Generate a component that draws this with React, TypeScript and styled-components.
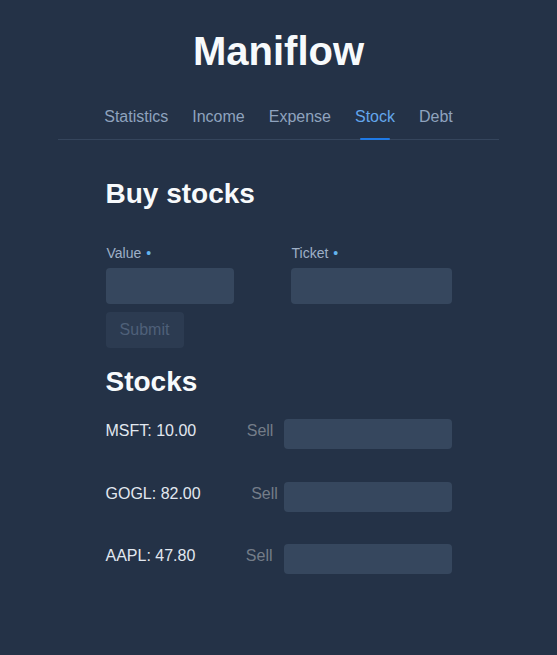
import React from "react";
import styled, { createGlobalStyle } from "styled-components";

const Global = createGlobalStyle`
  html, body {
    margin: 0;
    padding: 0;
    background: #243247;
    font-family: "Liberation Sans", Arial, sans-serif;
  }
  * { box-sizing: border-box; }
`;

const Page = styled.div`
  min-height: 655px;
  background: #243247;
  display: flex;
  flex-direction: column;
  align-items: center;
  padding-top: 27px;
`;

const Title = styled.h1`
  margin: 0;
  font-size: 40px;
  line-height: 48px;
  font-weight: 700;
  color: #f7fafc;
`;

const TabList = styled.nav`
  margin-top: 21.5px;
  width: 441px;
  display: flex;
  justify-content: center;
  border-bottom: 1px solid #35455c;
`;

const Tab = styled.div<{ $active?: boolean }>`
  position: relative;
  padding: 8px 12px 10px;
  font-size: 16px;
  line-height: 24px;
  color: ${(p) => (p.$active ? "#63a6ec" : "#8fa3be")};
  &::after {
    content: "";
    display: ${(p) => (p.$active ? "block" : "none")};
    position: absolute;
    left: 50%;
    bottom: -1px;
    width: 30px;
    height: 2px;
    margin-left: -15px;
    background: #1f7ae6;
    border-radius: 1px;
  }
`;

const Content = styled.main`
  width: 346px;
  margin-top: 37.5px;
  display: flex;
  flex-direction: column;
`;

const Heading = styled.h2<{ $gap?: number }>`
  margin: ${(p) => p.$gap ?? 0}px 0 0;
  font-size: 28px;
  line-height: 33.6px;
  font-weight: 700;
  color: #f7fafc;
`;

const FormRow = styled.div`
  margin-top: 32px;
  display: grid;
  grid-template-columns: 128px 161px;
  justify-content: space-between;
`;

const Field = styled.label`
  display: flex;
  flex-direction: column;
`;

const Label = styled.span`
  font-size: 14px;
  line-height: 21px;
  color: #9eb0c7;
  padding-left: 1px;
  margin-bottom: 4.5px;
`;

const Required = styled.span`
  color: #63b3ed;
  margin-left: 5px;
`;

const Input = styled.input<{ $h?: number }>`
  display: block;
  width: 100%;
  height: ${(p) => p.$h ?? 36}px;
  border: none;
  border-radius: 4px;
  background: #36475e;
  outline: none;
  padding: 0 10px;
  color: #e2e8f0;
  font-family: inherit;
  font-size: 16px;
`;

const SubmitButton = styled.button`
  margin-top: 8px;
  align-self: flex-start;
  width: 78px;
  height: 36px;
  border: none;
  border-radius: 4px;
  background: #2c3b51;
  color: #4f6079;
  font-family: inherit;
  font-size: 16px;
  padding: 0;
`;

const StockList = styled.div`
  margin-top: 21px;
  display: flex;
  flex-direction: column;
  gap: 32.5px;
`;

const StockRow = styled.div`
  display: flex;
  align-items: flex-start;
`;

const StockText = styled.span`
  font-size: 16px;
  line-height: 24px;
  color: #e2e8f0;
`;

const SellLabel = styled.span`
  margin-left: 50.5px;
  font-size: 16px;
  line-height: 24px;
  color: #747d89;
`;

const SellInputWrap = styled.div`
  margin-left: auto;
  width: 168px;
`;

const stocks = [
  { ticker: "MSFT", value: "10.00" },
  { ticker: "GOGL", value: "82.00" },
  { ticker: "AAPL", value: "47.80" },
];

export default function App() {
  return (
    <>
      <Global />
      <Page>
        <Title>Maniflow</Title>
        <TabList>
          <Tab>Statistics</Tab>
          <Tab>Income</Tab>
          <Tab>Expense</Tab>
          <Tab $active>Stock</Tab>
          <Tab>Debt</Tab>
        </TabList>
        <Content>
          <Heading>Buy stocks</Heading>
          <FormRow>
            <Field>
              <Label>
                Value<Required>•</Required>
              </Label>
              <Input />
            </Field>
            <Field>
              <Label>
                Ticket<Required>•</Required>
              </Label>
              <Input />
            </Field>
          </FormRow>
          <SubmitButton disabled>Submit</SubmitButton>
          <Heading $gap={16.5}>Stocks</Heading>
          <StockList>
            {stocks.map((s) => (
              <StockRow key={s.ticker}>
                <StockText>
                  {s.ticker}: {s.value}
                </StockText>
                <SellLabel>Sell</SellLabel>
                <SellInputWrap>
                  <Input $h={30} />
                </SellInputWrap>
              </StockRow>
            ))}
          </StockList>
        </Content>
      </Page>
    </>
  );
}
